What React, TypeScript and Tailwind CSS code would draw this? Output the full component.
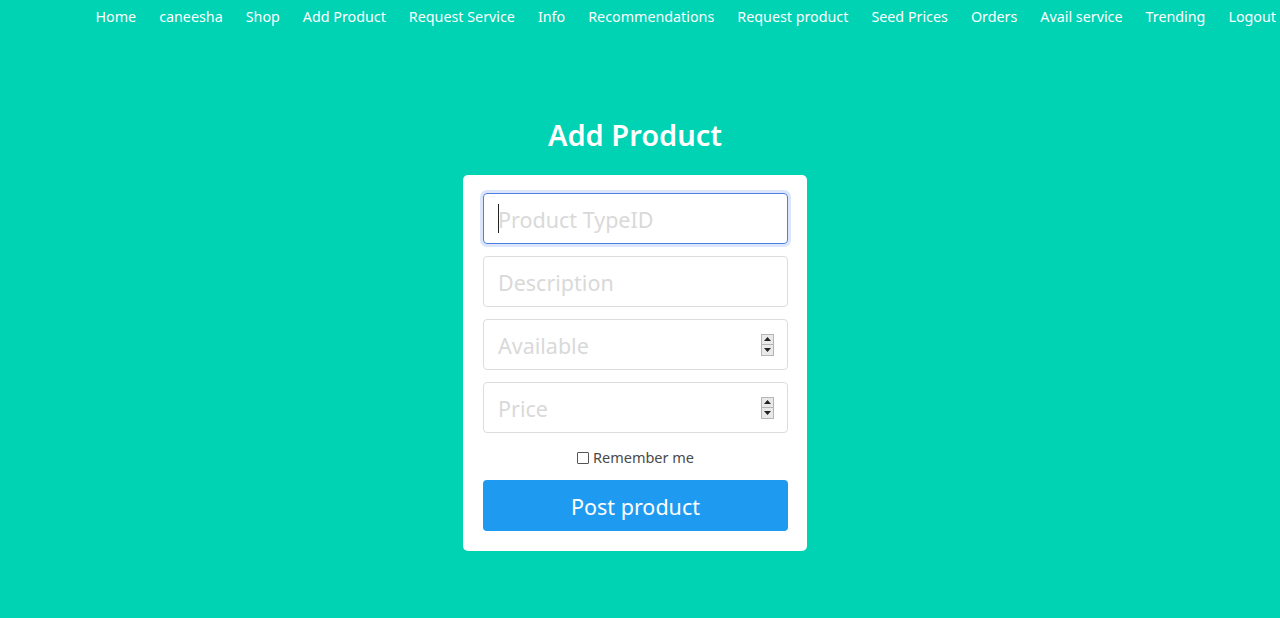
const links = [
  'Home',
  'caneesha',
  'Shop',
  'Add Product',
  'Request Service',
  'Info',
  'Recommendations',
  'Request product',
  'Seed Prices',
  'Orders',
  'Avail service',
  'Trending',
  'Logout',
]

function Spinner() {
  return (
    <div className="flex flex-col w-[13px] h-[22px] border border-[#b5b5b5] bg-[#e9e9e9]">
      <div className="flex-1 flex items-center justify-center border-b border-[#b5b5b5]">
        <svg width="7" height="4" viewBox="0 0 7 4"><path d="M0 4 L3.5 0 L7 4 Z" fill="#222" /></svg>
      </div>
      <div className="flex-1 flex items-center justify-center">
        <svg width="7" height="4" viewBox="0 0 7 4"><path d="M0 0 L3.5 4 L7 0 Z" fill="#222" /></svg>
      </div>
    </div>
  )
}

function Field({ placeholder, focused, number }: { placeholder: string; focused?: boolean; number?: boolean }) {
  return (
    <div
      className={
        focused
          ? 'flex items-center h-[51px] rounded-[4px] border border-[#4d7fe0] ring-[3px] ring-[#dce6fa] pl-[14px] pr-[13px]'
          : 'flex items-center h-[51px] rounded-[4px] border border-[#dddddd] pl-[14px] pr-[13px]'
      }
    >
      {focused && <span className="w-px h-[29px] bg-[#222] mr-[-1px]" />}
      <span className="flex-1 pt-[3px] text-[21.5px] text-[#d9d9d9] leading-none">{placeholder}</span>
      {number && <Spinner />}
    </div>
  )
}

export default function App() {
  return (
    <div className="min-h-[618px] bg-[#00d2b4] font-['Noto_Sans','Open_Sans',sans-serif]">
      <nav className="flex justify-end gap-[23px] pr-[4px] pt-[6px] h-[40px]">
        {links.map((l) => (
          <a key={l} className="text-[14.3px] text-white leading-[22px] whitespace-nowrap">
            {l}
          </a>
        ))}
      </nav>

      <div className="flex flex-col items-center pt-[73px] pr-[10px]">
        <h1 className="text-[29px] font-semibold text-white leading-[44px]">Add Product</h1>
        <div className="mt-[18px] w-[344px] bg-white rounded-[5px] pl-[20px] pr-[19px] pt-[18px] pb-[20px] flex flex-col gap-[12px]">
          <Field placeholder="Product TypeID" focused />
          <Field placeholder="Description" />
          <Field placeholder="Available" number />
          <Field placeholder="Price" number />
          <label className="flex items-center justify-center gap-[4px] h-[22px] mt-[2px] text-[14.5px] text-[#4a4a4a]">
            <span className="w-[12px] h-[12px] border border-[#555] rounded-[1px]" />
            Remember me
          </label>
          <button className="mt-[-1px] h-[51px] pt-[4px] rounded-[4px] bg-[#1e9bf0] text-white text-[21.5px]">
            Post product
          </button>
        </div>
      </div>
    </div>
  )
}
